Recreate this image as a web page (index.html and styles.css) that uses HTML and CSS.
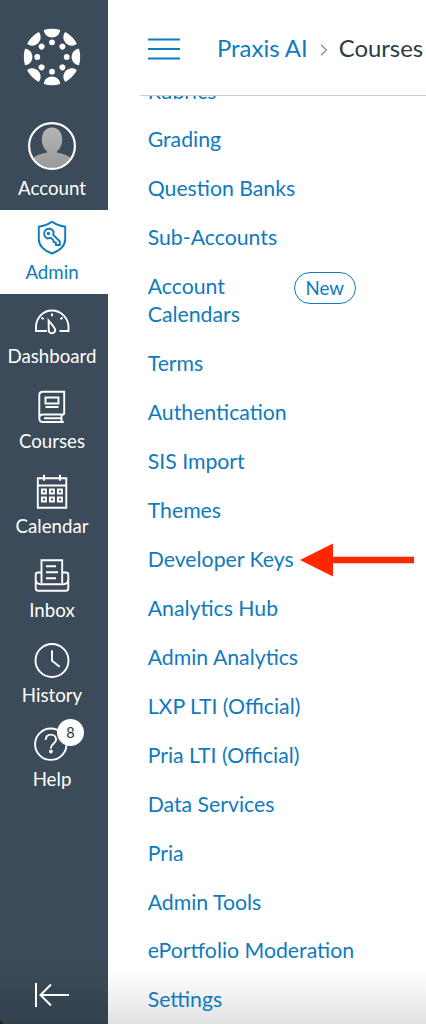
FILE: index.html
```html
<!DOCTYPE html>
<html lang="en">
<head>
<meta charset="utf-8">
<title>Courses</title>
<link rel="stylesheet" href="styles.css">
</head>
<body>
<div class="app">
  <nav class="sidebar">
    <a class="logo">
      <svg width="58" height="58" viewBox="-29 -29 58 58" fill="#fff">
        <defs>
          <g id="seg"><path d="M-8.200-27Q0-29.400 8.200-27C7.800-22.500 4.200-19.600 0-19.600S-7.800-22.500-8.200-27Z"/><circle cy="-14.700" r="2.900"/></g>
        </defs>
        <use href="#seg"/><use href="#seg" transform="rotate(45)"/><use href="#seg" transform="rotate(90)"/><use href="#seg" transform="rotate(135)"/><use href="#seg" transform="rotate(180)"/><use href="#seg" transform="rotate(225)"/><use href="#seg" transform="rotate(270)"/><use href="#seg" transform="rotate(315)"/>
      </svg>
    </a>
    <a class="item account">
      <svg width="48" height="48" viewBox="0 0 48 48">
        <defs>
          <clipPath id="face"><circle cx="24" cy="24" r="22"/></clipPath>
          <linearGradient id="grey" x2="0" y2="1"><stop offset="0" stop-color="#b5b5b5"/><stop offset="1" stop-color="#999"/></linearGradient>
        </defs>
        <g clip-path="url(#face)" fill="url(#grey)"><path d="M24 5.500C17.500 5.500 13.800 11 13.800 17.500c0 5 2 9.500 5.200 11.700v1.600C12 31.500 6 34.500 3 38v10h42V38c-3-3.500-9-6.500-16-7.200v-1.600c3.200-2.200 5.200-6.700 5.200-11.700C34.200 11 30.500 5.500 24 5.500Z"/></g>
        <circle cx="24" cy="24" r="22.900" fill="none" stroke="#fff" stroke-width="2.200"/>
      </svg>
      <span>Account</span>
    </a>
    <a class="item active">
      <svg class="icon" viewBox="0 0 36 36">
        <path d="M18 1.800C14 4.500 9.500 6.300 4.800 6.800V19c0 7 5 11.500 13.200 14.500C26.200 30.500 31.200 26 31.200 19V6.800C26.500 6.300 22 4.500 18 1.800Z"/>
        <path d="M19.600 11.600a5 5 0 1 0-6 6.900l3.200-.7 2.700 2.600.2 1.700 2 .3.300 2.600h3.800v-3.600L19.200 14.800Z"/><circle cx="14.400" cy="13.500" r=".8"/>
      </svg>
      <span>Admin</span>
    </a>
    <a class="item">
      <svg class="icon" viewBox="0 0 36 36">
        <path d="M13 27H2v-4C2 14 9 6.500 18 6.500S34.500 14 34.500 23v4H25.500"/>
        <path d="M14.600 16.500l.2 10c.3 4.300 6.800 3.200 6.400-.8-.3-2-3.600-5.700-6.600-9.200Z"/><path d="M18 9.500v2.800M7.500 13.500l2.200 1.800M28.600 13.500l-2.200 1.800"/>
      </svg>
      <span>Dashboard</span>
    </a>
    <a class="item">
      <svg class="icon" viewBox="0 0 36 36">
        <path d="M30.200 25.500V2.700H9C6.500 2.700 5.300 4.200 5.300 6.200v23.300c0 2.200 1.500 3.500 3.700 3.500h20.800M30.200 25.500H9c-2.200 0-3.700 1.400-3.700 3.500M27.500 25.500V33M10 29.300h17"/>
        <path d="M11.500 8.500h13v6h-13zM11.500 18h13"/>
      </svg>
      <span>Courses</span>
    </a>
    <a class="item">
      <svg class="icon" viewBox="0 0 36 36">
        <path d="M3.800 4.200h28.500v29.500H3.800zM3.800 11.500h28.500M10 .8v6M26 .8v6"/>
        <path d="M7.900 15.500h4v4h-4zM15.900 15.500h4v4h-4zM23.900 15.500h4v4h-4zM7.900 23.500h4v4h-4zM15.900 23.500h4v4h-4zM23.900 23.500h4v4h-4z"/>
      </svg>
      <span>Calendar</span>
    </a>
    <a class="item">
      <svg class="icon" viewBox="0 0 36 36">
        <path d="M7.500 25V2.300h20.700V25M7.500 14.500H4c-1.300 0-2.300 1-2.300 2.300v13.400c0 1.600 1 2.600 2.600 2.600h27.400c1.600 0 2.600-1 2.600-2.600V16.800c0-1.300-1-2.300-2.300-2.300h-3.800M1.700 21c0 3.500 2.300 5.300 5.300 5.300h22c3 0 5.300-1.800 5.300-5.300"/>
        <path d="M12 8.300h10M12 14.300h12M12 20.300h10"/>
      </svg>
      <span>Inbox</span>
    </a>
    <a class="item">
      <svg class="icon" viewBox="0 0 36 36"><circle cx="18" cy="17.500" r="16.500"/><path d="M18 7.300v10.500l7.700 6"/></svg>
      <span>History</span>
    </a>
    <a class="item help">
      <svg class="icon" viewBox="0 0 36 36"><circle cx="16.800" cy="17.200" r="15.700"/><path d="M11.600 13c0-3.500 2.200-5.400 5.200-5.400s5.300 1.900 5.300 4.900c0 4.300-5.200 4.200-5.200 8.300v.7"/><circle cx="16.900" cy="24.500" r="1"/></svg>
      <span>Help</span>
      <b class="badge">8</b>
    </a>
    <a class="collapse">
      <svg width="36" height="26" viewBox="0 0 36 26" fill="none" stroke="#fff" stroke-width="2"><path d="M2 1v24M35 13H6.500M17 2.500L6.500 13 17 23.500"/></svg>
    </a>
  </nav>
  <main class="main">
    <header class="header">
      <svg class="burger" width="32" height="22" viewBox="0 0 32 22" stroke="#0f7bbd" stroke-width="2"><path d="M0 1.500h32M0 11h32M0 20.500h32"/></svg>
      <a class="crumb">Praxis AI</a>
      <svg class="chevron" width="8" height="12" viewBox="0 0 8 12" fill="none" stroke="#888" stroke-width="1.200"><path d="M1 .8L6.500 6 1 11.200"/></svg>
      <span class="current">Courses</span>
    </header>
    <div class="menu">
      <a>Rubrics</a>
      <a>Grading</a>
      <a>Question Banks</a>
      <a>Sub-Accounts</a>
      <a class="with-pill"><span>Account Calendars</span><em class="pill">New</em></a>
      <a>Terms</a>
      <a>Authentication</a>
      <a>SIS Import</a>
      <a>Themes</a>
      <a class="with-arrow">Developer Keys
        <svg class="arrow" width="114" height="34" viewBox="0 0 114 34" fill="#ff2600"><path d="M0 17L33 .5V13.700h81v6.600H33V33.500Z"/></svg>
      </a>
      <a>Analytics Hub</a>
      <a>Admin Analytics</a>
      <a>LXP LTI (Official)</a>
      <a>Pria LTI (Official)</a>
      <a>Data Services</a>
      <a>Pria</a>
      <a>Admin Tools</a>
      <a>ePortfolio Moderation</a>
      <a>Settings</a>
    </div>
  </main>
</div>
</body>
</html>
```
FILE: styles.css
```css
* { box-sizing: border-box; }
body { margin: 0; background: #fff; font-family: Lato, Carlito, sans-serif; }
.app { display: flex; width: 426px; height: 1024px; overflow: hidden; background: #2a1c18; }
.sidebar {
  display: flex; flex-direction: column; flex: none; width: 108px; color: #fff;
  background: linear-gradient(#3b4b59 0 960px, #33414d 1024px);
  border-bottom-left-radius: 6px;
}
.logo { height: 125.200px; padding: 27.500px 0 0 23px; flex: none; }
.item {
  position: relative; flex: none; height: 84.600px; padding: 10px 4px 0 0;
  display: flex; flex-direction: column; align-items: center;
  font-size: 18.700px; line-height: 24px;
}
.item span { margin-top: 4px; }
.account { padding-top: 0; }
.account svg { margin-top: -3px; flex: none; }
.account span { margin-top: 5.500px; }
.icon { width: 36px; height: 36px; flex: none; fill: none; stroke: currentColor; stroke-width: 1.900; }
.active { background: #fff; color: #0f7bbd; }
.badge {
  position: absolute; left: 57px; top: 2px; width: 27px; height: 27px; border-radius: 50%;
  background: #fff; color: #2d3b45; font-size: 14.500px; font-weight: 400; line-height: 27px; text-align: center;
}
.collapse { margin-top: auto; padding: 0 0 16px 34px; }
.collapse svg { display: block; }
.main {
  flex: 1; min-width: 0; display: flex; flex-direction: column;
  background: linear-gradient(#fff 0 970px, #e2e2e2 1024px);
}
.header {
  flex: none; height: 96px; margin-left: 32px; padding: 0 0 0 8px;
  border-bottom: 1px solid #c7cdd1; display: flex; align-items: center; font-size: 23.900px; white-space: nowrap;
}
.crumb { margin-left: 37px; color: #0f7bbd; }
.chevron { margin: 5px 11px 0 12px; flex: none; }
.current { color: #2d3b45; }
.burger { flex: none; margin-top: 3px; }
.menu {
  flex: 1; min-height: 0; overflow: hidden; display: flex; flex-direction: column; gap: 20.950px;
  padding-left: 39.700px; color: #0f7bbd; font-size: 21.250px; line-height: 28px;
}
.menu > a { flex: none; white-space: nowrap; }
.menu > a:first-child { margin-top: -19.500px; }
.with-pill { display: flex; align-items: flex-start; }
.with-pill span { width: 146px; white-space: normal; padding-right: 30px; }
.pill {
  height: 32px; width: 62px; margin: 0 0 -4px; border: 1.500px solid #0f7bbd; border-radius: 16px;
  font-style: normal; font-size: 18.700px; line-height: 31px; text-align: center;
}
.with-arrow { position: relative; }
.arrow { position: absolute; left: 152px; top: -2px; }
```
